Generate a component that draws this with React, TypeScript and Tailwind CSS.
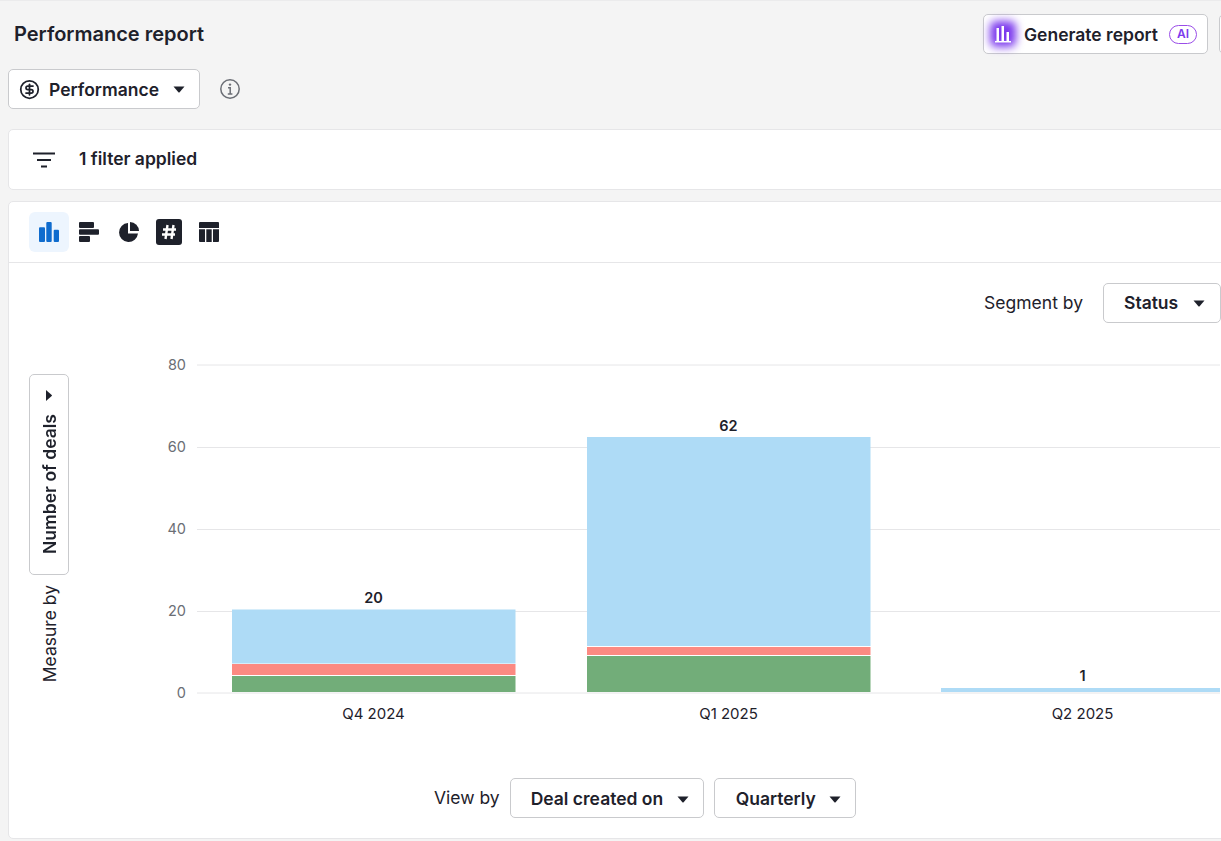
import { CircleDollarSign } from 'lucide-react';

const FONT = 'Inter, "Liberation Sans", sans-serif';

function Caret({ className = '' }: { className?: string }) {
  return (
    <svg width="12" height="7" viewBox="0 0 12 7" className={className}>
      <path d="M0.5 0.5h11L6.6 6.2a.8.8 0 0 1-1.2 0z" fill="#1e212b" />
    </svg>
  );
}

function SelectButton({ label, className }: { label: string; className: string }) {
  return (
    <button
      type="button"
      className={`flex h-10 shrink-0 items-center justify-between rounded-[5px] border border-[#c9cacd] bg-white text-[17.5px] font-semibold text-[#1e212b] ${className}`}
    >
      <span>{label}</span>
      <Caret />
    </button>
  );
}

function ChartTabs() {
  return (
    <div className="flex h-[61px] items-center border-b border-[#e6e6e8] pl-5">
      <div className="flex h-10 w-10 items-center justify-center rounded-md bg-[#edf5fe]">
        <svg width="20" height="20" viewBox="0 0 20 20" fill="#0f6cce">
          <rect x="0" y="5.3" width="6" height="14.7" rx="1" />
          <rect x="7.3" y="0" width="5.4" height="20" rx="1" />
          <rect x="14.7" y="7.7" width="5.3" height="12.3" rx="1" />
        </svg>
      </div>
      <div className="flex h-10 w-10 items-center justify-center">
        <svg width="20" height="20" viewBox="0 0 20 20" fill="#1e212b">
          <rect x="0" y="0" width="15" height="6" rx="1" />
          <rect x="0" y="7.3" width="20" height="5.4" rx="1" />
          <rect x="0" y="14" width="11" height="6" rx="1" />
        </svg>
      </div>
      <div className="flex h-10 w-10 items-center justify-center">
        <svg width="20" height="20" viewBox="0 0 20 20" fill="#1e212b">
          <path d="M9 1a9.5 9.5 0 1 0 10 10.5H9z" />
          <path d="M11 0a9 9 0 0 1 9 9h-9z" />
        </svg>
      </div>
      <div className="flex h-10 w-10 items-center justify-center">
        <svg width="26" height="26" viewBox="0 0 26 26">
          <rect width="26" height="26" rx="3" fill="#1e212b" />
          <path d="M11.5 6l-2 14M17.5 6l-2 14M7 10.5h13M6 15.5h13" stroke="#fff" strokeWidth="2.4" fill="none" />
        </svg>
      </div>
      <div className="flex h-10 w-10 items-center justify-center">
        <svg width="20" height="20" viewBox="0 0 20 20" fill="#1e212b">
          <path d="M1 0h18a1 1 0 0 1 1 1v5H0V1a1 1 0 0 1 1-1z" />
          <path d="M0 7.3h6V20H1a1 1 0 0 1-1-1z" />
          <rect x="7.3" y="7.3" width="5.4" height="12.7" />
          <path d="M14 7.3h6V19a1 1 0 0 1-1 1h-5z" />
        </svg>
      </div>
    </div>
  );
}

const GRID = [
  { label: '80', y: 25 },
  { label: '60', y: 107.5 },
  { label: '40', y: 189.5 },
  { label: '20', y: 271.5 },
  { label: '0', y: 353 },
];

// y values are relative to the top of the svg
const BARS = [
  {
    x: 163,
    total: '20',
    name: 'Q4 2024',
    labelY: 262.5,
    segs: [
      { y: 269.5, h: 54, fill: '#aedbf6' },
      { y: 324, h: 11, fill: '#fc8a82' },
      { y: 336, h: 16, fill: '#72ad79' },
    ],
  },
  {
    x: 518,
    total: '62',
    name: 'Q1 2025',
    labelY: 91,
    segs: [
      { y: 97, h: 209, fill: '#aedbf6' },
      { y: 307, h: 8, fill: '#fc8a82' },
      { y: 316, h: 36, fill: '#72ad79' },
    ],
  },
  {
    x: 872,
    total: '1',
    name: 'Q2 2025',
    labelY: 341,
    segs: [{ y: 348, h: 4, fill: '#aedbf6' }],
  },
];

function Chart() {
  return (
    <svg width="1151" height="400" className="block shrink-0" style={{ fontFamily: FONT }}>
      {GRID.map((g) => (
        <g key={g.label}>
          <line x1="128" x2="1151" y1={g.y} y2={g.y} stroke="#e6e6e8" />
          <text x="117" y={g.y + 4.5} textAnchor="end" fontSize="14.5" fill="#6b6e75">
            {g.label}
          </text>
        </g>
      ))}
      {BARS.map((b) => (
        <g key={b.name}>
          {b.segs.map((s) => (
            <rect key={s.y} x={b.x} y={s.y} width="283.5" height={s.h} fill={s.fill} />
          ))}
          <text x={b.x + 141.5} y={b.labelY} textAnchor="middle" fontSize="14.5" fontWeight="600" fill="#1e212b">
            {b.total}
          </text>
          <text x={b.x + 141.5} y="379" textAnchor="middle" fontSize="15" fill="#1e212b">
            {b.name}
          </text>
        </g>
      ))}
    </svg>
  );
}

export default function App() {
  return (
    <div
      className="h-[841px] w-[1221px] overflow-hidden border-t border-[#ebebec] bg-[#f4f4f4] text-[#1e212b]"
      style={{ fontFamily: FONT }}
    >
      <div className="w-[1300px]">
        {/* Header */}
        <div className="flex h-[68px] items-start justify-between pt-[13px] pl-[14px]">
          <h1 className="mt-[4px] text-[20px] leading-[32px] font-semibold">Performance report</h1>
          <div className="flex gap-[11px] pr-[1px]">
            <button
              type="button"
              className="flex h-10 w-[225px] items-center rounded-[5px] border border-[#c9cacd] bg-white pl-[5px] text-[17.5px] font-semibold"
            >
              <span className="relative flex h-7 w-7 items-center justify-center">
                <span className="absolute inset-[1px] rounded-md bg-[#7c3aed] blur-[4px]" />
                <svg width="18" height="18" viewBox="0 0 18 18" fill="#fff" className="relative">
                  <rect x="2.5" y="3" width="2.5" height="13" />
                  <rect x="7.5" y="1" width="2.5" height="15" />
                  <rect x="12.5" y="7" width="2.5" height="9" />
                  <rect x="1" y="16" width="16" height="1.5" />
                </svg>
              </span>
              <span className="ml-[7px] pt-[2px]">Generate report</span>
              <span className="ml-[11px] flex h-[19px] w-[28px] items-center justify-center rounded-full border border-[#9a4de8] text-[12px] font-semibold text-[#7c3aed]">
                AI
              </span>
            </button>
            <div className="h-10 w-[80px] rounded-[5px] border border-[#c9cacd] bg-white" />
          </div>
        </div>

        {/* Report picker */}
        <div className="flex items-center pl-2">
          <button
            type="button"
            className="flex h-10 w-[192px] items-center rounded-[5px] border border-[#c9cacd] bg-white pr-[14px] pl-[10px] text-[17.5px] font-semibold"
          >
            <CircleDollarSign size={21} strokeWidth={2} />
            <span className="ml-[9px] flex-1 pt-[2px] text-left">Performance</span>
            <Caret />
          </button>
          <svg width="20" height="20" viewBox="0 0 20 20" fill="none" stroke="#6b6e75" strokeWidth="1.5" className="ml-5">
            <circle cx="10" cy="10" r="9.2" />
            <path d="M8 8.7h2.2v6.2M7.800 15h4.600" />
            <circle cx="10" cy="5.600" r="1.200" fill="#6b6e75" stroke="none" />
          </svg>
        </div>

        {/* Filter card */}
        <div className="mt-5 ml-2 flex h-[61px] items-center rounded-l-[5px] border border-[#e6e6e8] bg-white pl-[23px]">
          <svg width="24" height="16" viewBox="0 0 24 16" stroke="#1e212b" strokeWidth="2">
            <path d="M1 1.5h22M5 8h14M9 14.5h6" />
          </svg>
          <span className="ml-[23px] text-[17.5px] font-semibold">1 filter applied</span>
        </div>

        {/* Chart card */}
        <div className="mt-[11px] ml-2 h-[638px] rounded-l-[5px] border border-[#e6e6e8] bg-white">
          <ChartTabs />
          <div className="flex items-center justify-end pt-5 pr-[78px]">
            <span className="mr-5 text-[17.5px]">Segment by</span>
            <SelectButton label="Status" className="w-[118px] pr-[15px] pl-5" />
          </div>
          <div className="mt-[17px] flex">
            <div className="ml-5 flex w-10 shrink-0 flex-col items-center pt-[34px]">
              <button
                type="button"
                className="flex h-[201px] w-10 rotate-180 items-center justify-between rounded-[5px] border border-[#c9cacd] bg-white pt-5 pb-[17px] text-[17.5px] font-semibold [writing-mode:vertical-rl]"
              >
                <span className="-translate-x-px">Number of deals</span>
                <Caret className="rotate-90" />
              </button>
              <span className="mt-[10px] translate-x-px rotate-180 text-[17.5px] [writing-mode:vertical-rl]">
                Measure by
              </span>
            </div>
            <Chart />
          </div>
          <div className="mt-[38px] flex items-center pl-[425px]">
            <span className="mr-[10px] text-[17.5px]">View by</span>
            <SelectButton label="Deal created on" className="w-[194px] pt-[2px] pr-[14px] pl-5" />
            <SelectButton label="Quarterly" className="ml-[10px] w-[142px] pt-[2px] pr-[14px] pl-[21px]" />
          </div>
        </div>
      </div>
    </div>
  );
}
